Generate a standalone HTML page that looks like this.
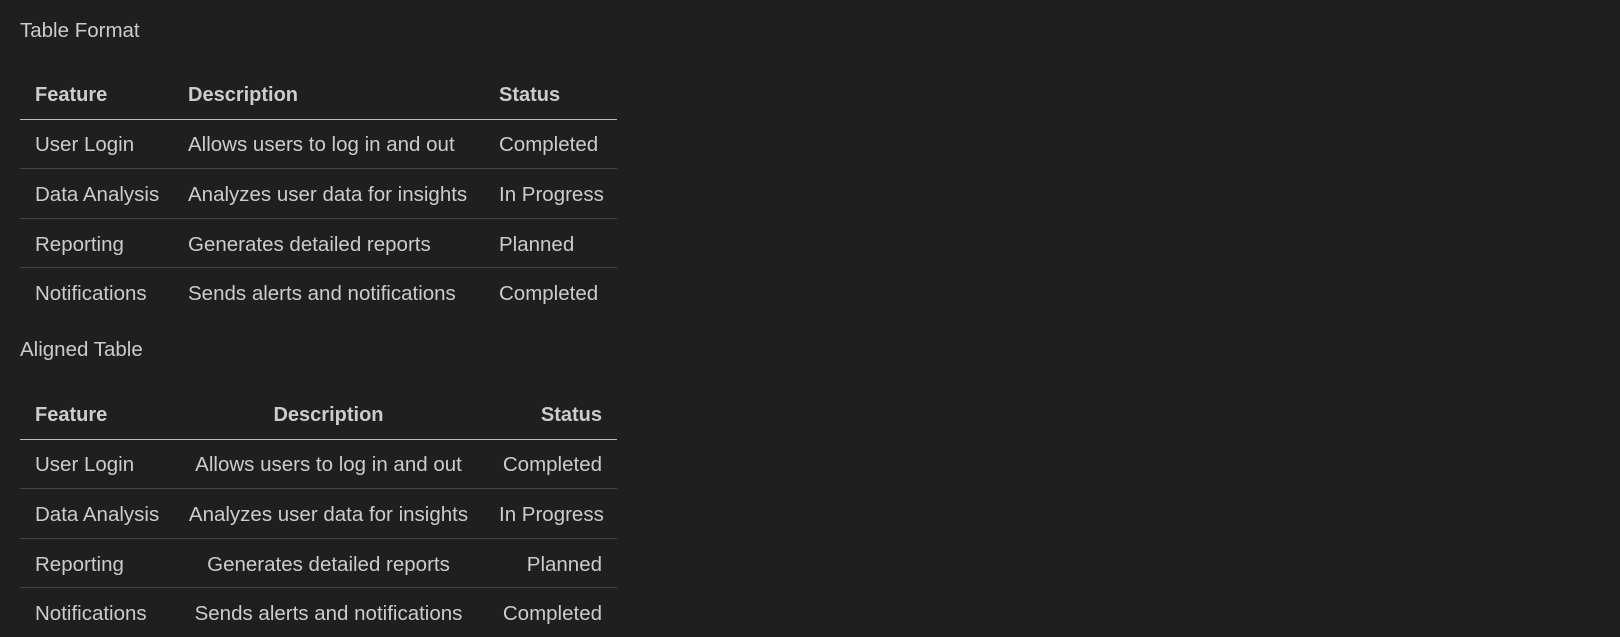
<!DOCTYPE html>
<html><head><style>
body{margin:0;background:#1f1f1f;width:1620px;height:637px;overflow:hidden;font-family:"Liberation Sans",sans-serif;color:#cccccc;font-size:20.5px}
h{position:absolute;left:20px;font-size:20.5px;line-height:24px}
table{position:absolute;left:20px;width:597px;border-collapse:collapse;table-layout:fixed}
td,th{height:45.6px;padding:3px 15px 0 15px;white-space:nowrap;border-bottom:1px solid #454545;vertical-align:middle}
th{font-weight:bold;font-size:20px;border-bottom:1px solid #bbbbbb;text-align:left}
tr:last-child td{border-bottom:none}
.a th:nth-child(2),.a td:nth-child(2){text-align:center}
.a th:nth-child(3),.a td:nth-child(3){text-align:right}
</style></head><body>
<h style="top:19px">Table Format</h>
<table style="top:70px"><colgroup><col style="width:153px"><col style="width:311px"><col style="width:133px"></colgroup>
<tr><th>Feature</th><th>Description</th><th>Status</th></tr>
<tr><td>User Login</td><td>Allows users to log in and out</td><td>Completed</td></tr>
<tr><td>Data Analysis</td><td>Analyzes user data for insights</td><td>In Progress</td></tr>
<tr><td>Reporting</td><td>Generates detailed reports</td><td>Planned</td></tr>
<tr><td>Notifications</td><td>Sends alerts and notifications</td><td>Completed</td></tr>
</table>
<h style="top:338px">Aligned Table</h>
<table class="a" style="top:390px"><colgroup><col style="width:153px"><col style="width:311px"><col style="width:133px"></colgroup>
<tr><th>Feature</th><th>Description</th><th>Status</th></tr>
<tr><td>User Login</td><td>Allows users to log in and out</td><td>Completed</td></tr>
<tr><td>Data Analysis</td><td>Analyzes user data for insights</td><td>In Progress</td></tr>
<tr><td>Reporting</td><td>Generates detailed reports</td><td>Planned</td></tr>
<tr><td>Notifications</td><td>Sends alerts and notifications</td><td>Completed</td></tr>
</table>
</body></html>
